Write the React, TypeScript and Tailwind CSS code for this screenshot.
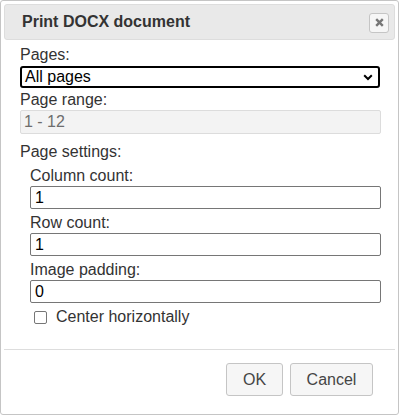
import React from "react";

export default function App() {
  const font = { fontFamily: '"Liberation Sans", Arial, sans-serif' };
  return (
    <div style={font} className="w-[399px] h-[415px] bg-white">
      <div className="w-[399px] h-[415px] border border-[#c5c5c5] rounded-[3px] p-[3px] flex flex-col text-[16px] leading-[18px] text-[#333333]">
        {/* title bar */}
        <div className="h-[36px] border border-[#dddddd] bg-[#e9e9e9] rounded-[3px] flex items-center justify-between pl-[17px] pr-[5px]">
          <span className="font-bold text-[16px] text-[#333333]">Print DOCX document</span>
          <button className="w-[20px] h-[20px] mt-[1px] border border-[#c5c5c5] bg-[#f6f6f6] rounded-[3px] flex items-center justify-center">
            <svg width="9" height="9" viewBox="0 0 9 9">
              <path d="M1.2 1.2 L7.8 7.8 M7.8 1.2 L1.2 7.8" stroke="#777777" strokeWidth="2.4" strokeLinecap="butt" />
            </svg>
          </button>
        </div>
        {/* content */}
        <div className="pl-[16px] pt-[6px] flex flex-col">
          <label className="block">Pages:</label>
          <div className="mt-[2px] w-[360px] h-[22px] border-2 border-black rounded-[3px] flex items-center justify-between pl-[3px] pr-[5px] text-black">
            <span>All pages</span>
            <svg width="10" height="7" viewBox="0 0 10 7">
              <path d="M1.2 1.3 L5 5 L8.8 1.3" stroke="#000" strokeWidth="2" fill="none" />
            </svg>
          </div>
          <label className="block mt-[3px]">Page range:</label>
          <div className="mt-[1px] w-[361px] h-[24px] border border-[#dcdcdc] bg-[#f3f3f3] rounded-[2px] flex items-center pl-[3px] text-[#6d6d6d]">
            1 - 12
          </div>
          <label className="block mt-[9px]">Page settings:</label>
          <div className="pl-[10px] flex flex-col">
            <label className="block mt-[6px]">Column count:</label>
            <div className="mt-[1px] w-[351px] h-[23px] border border-[#767676] rounded-[2px] flex items-center pl-[4px] text-black">1</div>
            <label className="block mt-[5px]">Row count:</label>
            <div className="mt-[1px] w-[351px] h-[23px] border border-[#767676] rounded-[2px] flex items-center pl-[4px] text-black">1</div>
            <label className="block mt-[5px]">Image padding:</label>
            <div className="mt-[1px] w-[351px] h-[23px] border border-[#767676] rounded-[2px] flex items-center pl-[4px] text-black">0</div>
            <div className="mt-[5px] flex items-center pl-[4px]">
              <span className="w-[13px] h-[13px] border border-[#767676] rounded-[2px] bg-white" />
              <span className="ml-[9px]">Center horizontally</span>
            </div>
          </div>
        </div>
        {/* button pane */}
        <div className="mt-[23px] border-t border-[#dddddd] flex justify-end pr-[22px] pt-[13px] gap-[7px]">
          <button className="w-[57px] h-[33px] border border-[#c5c5c5] bg-[#f6f6f6] rounded-[3px] text-[#454545] text-[16px]">OK</button>
          <button className="w-[83px] h-[33px] border border-[#c5c5c5] bg-[#f6f6f6] rounded-[3px] text-[#454545] text-[16px]">Cancel</button>
        </div>
      </div>
    </div>
  );
}
